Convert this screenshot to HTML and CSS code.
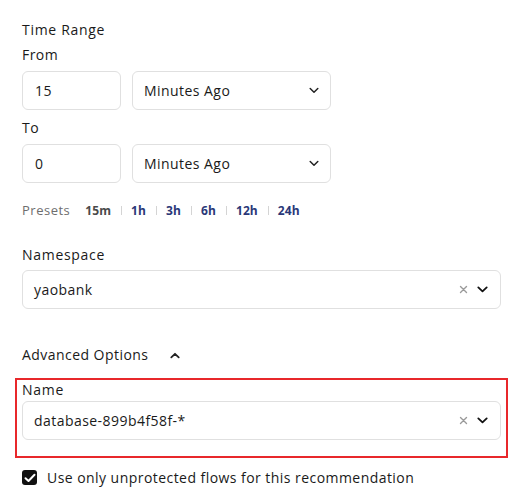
FILE: index.html
```html
<!DOCTYPE html>
<html>
<head>
<meta charset="utf-8">
<link rel="stylesheet" href="styles.css">
</head>
<body>
<div class="panel">
  <div class="group-title">Time Range</div>
  <div class="sub-label">From</div>
  <div class="row">
    <div class="input">15</div>
    <div class="select"><span>Minutes Ago</span>
      <svg class="chev" width="10" height="7" viewBox="0 0 10 7"><path d="M1.2 1.5 L5 5.2 L8.8 1.5" fill="none" stroke="#222" stroke-width="1.5" stroke-linecap="round" stroke-linejoin="round"/></svg>
    </div>
  </div>
  <div class="sub-label to">To</div>
  <div class="row">
    <div class="input">0</div>
    <div class="select"><span>Minutes Ago</span>
      <svg class="chev" width="10" height="7" viewBox="0 0 10 7"><path d="M1.2 1.5 L5 5.2 L8.8 1.5" fill="none" stroke="#222" stroke-width="1.5" stroke-linecap="round" stroke-linejoin="round"/></svg>
    </div>
  </div>
  <div class="presets">
    <span class="presets-label">Presets</span>
    <span class="preset active">15m</span><span class="sep"></span>
    <span class="preset">1h</span><span class="sep"></span>
    <span class="preset">3h</span><span class="sep"></span>
    <span class="preset">6h</span><span class="sep"></span>
    <span class="preset">12h</span><span class="sep"></span>
    <span class="preset">24h</span>
  </div>

  <div class="field ns">
    <div class="group-title">Namespace</div>
    <div class="wide-select">
      <span>yaobank</span>
      <span class="icons">
        <svg width="9" height="9" viewBox="0 0 9 9"><path d="M1.5 1.5 L7.5 7.5 M7.5 1.5 L1.5 7.5" stroke="#9a9a9a" stroke-width="1.4" stroke-linecap="round"/></svg>
        <svg width="11" height="7" viewBox="0 0 11 7"><path d="M1.3 1.4 L5.5 5.4 L9.7 1.4" fill="none" stroke="#111" stroke-width="1.8" stroke-linecap="round" stroke-linejoin="round"/></svg>
      </span>
    </div>
  </div>

  <div class="advanced">
    <span>Advanced Options</span>
    <svg width="10" height="7" viewBox="0 0 10 7"><path d="M1.3 5.4 L5 1.8 L8.7 5.4" fill="none" stroke="#222" stroke-width="1.8" stroke-linecap="round" stroke-linejoin="round"/></svg>
  </div>

  <div class="highlight">
    <div class="group-title">Name</div>
    <div class="wide-select">
      <span>database-899b4f58f-*</span>
      <span class="icons">
        <svg width="9" height="9" viewBox="0 0 9 9"><path d="M1.5 1.5 L7.5 7.5 M7.5 1.5 L1.5 7.5" stroke="#9a9a9a" stroke-width="1.4" stroke-linecap="round"/></svg>
        <svg width="11" height="7" viewBox="0 0 11 7"><path d="M1.3 1.4 L5.5 5.4 L9.7 1.4" fill="none" stroke="#111" stroke-width="1.8" stroke-linecap="round" stroke-linejoin="round"/></svg>
      </span>
    </div>
  </div>

  <label class="check">
    <span class="box"><svg width="12" height="10" viewBox="0 0 12 10"><path d="M1.5 5.2 L4.5 8 L10.5 1.8" fill="none" stroke="#fff" stroke-width="2" stroke-linecap="round" stroke-linejoin="round"/></svg></span>
    <span>Use only unprotected flows for this recommendation</span>
  </label>
</div>
</body>
</html>
```

FILE: styles.css
```css
* { box-sizing: border-box; }
body {
  margin: 0;
  background: #fff;
  font-family: "Open Sans", "DejaVu Sans", sans-serif;
  color: #1a1a1a;
  letter-spacing: 0.45px;
}
.panel {
  padding: 20px 0 0 22px;
  width: 514px;
}
.group-title {
  font-size: 14px;
  font-weight: 500;
  line-height: 20px;
  color: #1a1a1a;
  letter-spacing: 0.7px;
}
.sub-label {
  font-size: 14px;
  line-height: 20px;
  margin-top: 5px;
  color: #1a1a1a;
}
.sub-label.to { margin-top: 8px; }
.row {
  display: flex;
  gap: 11px;
  margin-top: 6px;
}
.input, .select, .wide-select {
  height: 39px;
  border: 1px solid #e0e0e0;
  border-radius: 6px;
  display: flex;
  align-items: center;
  font-size: 14px;
  color: #1a1a1a;
}
.input { width: 99px; padding-left: 12px; }
.select {
  width: 199px;
  padding: 0 11px 0 11px;
  justify-content: space-between;
}
.presets {
  display: flex;
  align-items: center;
  margin-top: 17px;
  height: 20px;
}
.presets-label { color: #6e6e6e; font-size: 13px; margin-right: 15px; letter-spacing: 0.5px; }
.preset { font-weight: 700; color: #2a3878; font-size: 12px; letter-spacing: 0.1px; }
.preset.active { color: #4a4a4a; }
.sep {
  width: 1px;
  height: 9px;
  background: #d4d4d4;
  margin: 1px 9px 0 10px;
}
.field.ns { margin-top: 25px; }
.wide-select {
  width: 479px;
  margin-top: 5px;
  padding: 0 12px 0 11px;
  justify-content: space-between;
}
.icons { display: flex; align-items: center; gap: 9px; }
.advanced {
  margin-top: 36px;
  display: flex;
  align-items: center;
  gap: 22px;
  font-size: 14px;
  line-height: 20px;
}
.highlight {
  margin: 13px 0 0 -7px;
  width: 493px;
  height: 80px;
  border: 2px solid #e8282b;
  padding: 0 0 0 5px;
}
.highlight .wide-select { margin-top: 1px; }
.check {
  display: flex;
  align-items: center;
  gap: 10px;
  margin-top: 10px;
  font-size: 14px;
  color: #1a1a1a;
}
.box {
  width: 15px;
  height: 15px;
  border-radius: 3px;
  background: #111;
  display: flex;
  align-items: center;
  justify-content: center;
}
```
